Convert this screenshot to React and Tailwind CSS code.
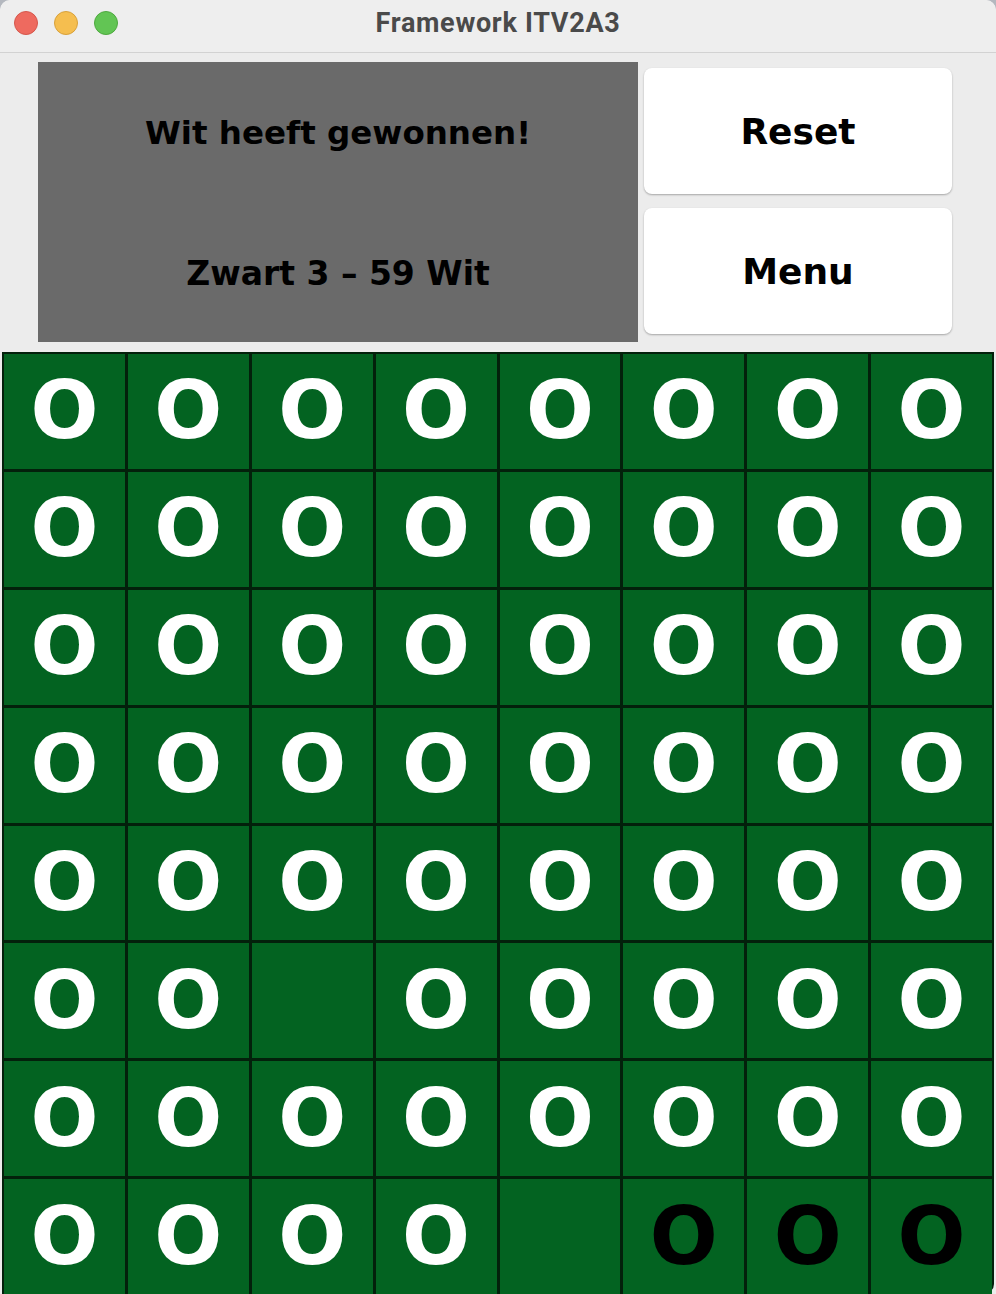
import React from "react";

const board = [
  "WWWWWWWW",
  "WWWWWWWW",
  "WWWWWWWW",
  "WWWWWWWW",
  "WWWWWWWW",
  "WW.WWWWW",
  "WWWWWWWW",
  "WWWW.BBB",
];

function Cell({ v }) {
  return (
    <div className="bg-[#036321] flex items-center justify-center overflow-hidden">
      {v !== "." && (
        <span
          className={
            "font-bold text-[80px] leading-none " +
            (v === "W" ? "text-white" : "text-black")
          }
          style={{ fontFamily: '"DejaVu Sans", sans-serif' }}
        >
          O
        </span>
      )}
    </div>
  );
}

export default function App() {
  return (
    <div className="w-[996px] h-[1294px] bg-[#b4b8bf]">
      <div
        className="w-[996px] h-[1294px] overflow-hidden bg-[#ececec] flex flex-col rounded-t-[10px]"
        style={{ fontFamily: '"DejaVu Sans", sans-serif' }}
      >
        <div className="h-[53px] shrink-0 relative flex items-center justify-center border-b border-[#d2d2d2] bg-[#eeeeee] rounded-t-[10px]">
          <div className="absolute left-[14px] top-[11px] flex gap-[16px]">
            <div className="w-[24px] h-[24px] rounded-full bg-[#ee6a5f] border border-[#d5574c]" />
            <div className="w-[24px] h-[24px] rounded-full bg-[#f5be4f] border border-[#d8a13b]" />
            <div className="w-[24px] h-[24px] rounded-full bg-[#62c554] border border-[#4ea93f]" />
          </div>
          <span
            className="text-[27px] leading-none font-bold text-[#4a4a4a] tracking-[0.7px] -mt-[6px]"
            style={{ fontFamily: 'Roboto, "Liberation Sans", sans-serif' }}
          >
            Framework ITV2A3
          </span>
        </div>
        <div className="flex pl-[38px] pt-[9px] shrink-0">
          <div className="w-[600px] h-[280px] bg-[#6a6a6a] grid grid-rows-2">
            <div className="flex items-center justify-center pt-[3px] text-[32.5px] font-bold text-black">
              Wit heeft gewonnen!
            </div>
            <div className="flex items-center justify-center pt-[3px] text-[33px] font-bold text-black">
              Zwart 3 – 59 Wit
            </div>
          </div>
          <div className="ml-[6px] w-[308px] flex flex-col pt-[6px] gap-[14px]">
            <div className="h-[126px] bg-white rounded-[8px] shadow-[0_1px_2px_rgba(0,0,0,0.3)] flex items-center justify-center pt-[1px] text-[36px] font-bold text-black">
              Reset
            </div>
            <div className="h-[126px] bg-white rounded-[8px] shadow-[0_1px_2px_rgba(0,0,0,0.3)] flex items-center justify-center pt-[1px] text-[36px] font-bold text-black">
              Menu
            </div>
          </div>
        </div>
        <div className="mt-[10px] mx-[2px] bg-[#03200b] pt-[2px] px-[2px] grid grid-cols-8 grid-rows-8 gap-[3px] rounded-br-[10px] h-[942px] shrink-0">
          {board.flatMap((row, r) =>
            row.split("").map((v, c) => <Cell key={r + "-" + c} v={v} />)
          )}
        </div>
      </div>
    </div>
  );
}
